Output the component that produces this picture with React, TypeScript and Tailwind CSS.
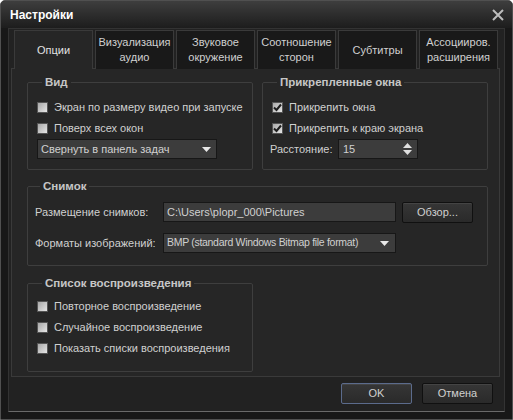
import React from 'react';

const tabs = [
  ['Опции'],
  ['Визуализация', 'аудио'],
  ['Звуковое', 'окружение'],
  ['Соотношение', 'сторон'],
  ['Субтитры'],
  ['Ассоцииров.', 'расширения'],
];

const Check: React.FC<{ checked?: boolean; label: string }> = ({ checked, label }) => (
  <div className="h-[21px] flex items-center gap-[6px] whitespace-nowrap">
    <span className="w-[11px] h-[11px] shrink-0 border border-[#555] bg-gradient-to-br from-[#a8a8a8] to-[#e6e6e6] flex items-center justify-center">
      {checked && (
        <svg width="9" height="9" viewBox="0 0 9 9">
          <path d="M1 4.5 L3.5 7 L8 1.5" stroke="#1e1e1e" strokeWidth="2" fill="none" />
        </svg>
      )}
    </span>
    <span>{label}</span>
  </div>
);

const Arrow: React.FC = () => (
  <svg width="9" height="5" viewBox="0 0 9 5" className="shrink-0">
    <path d="M0 0 H9 L4.5 5 Z" fill="#e8e8e8" />
  </svg>
);

const Group: React.FC<{ title: string; className: string; children: React.ReactNode }> = ({ title, className, children }) => (
  <fieldset className={`min-w-0 shrink-0 border border-[#3e3e3e] rounded-[2px] px-[9px] ${className}`}>
    <legend className="ml-[5px] px-[3px] font-bold text-[11.5px] text-[#c6c6c6] leading-[14px]">{title}</legend>
    {children}
  </fieldset>
);

const Button: React.FC<{ label: string; primary?: boolean; className?: string }> = ({ label, primary, className }) => (
  <div
    className={`h-[21px] w-[71px] shrink-0 flex items-center justify-center rounded-[2px] bg-gradient-to-b from-[#363636] to-[#2a2a2a] border ${
      primary ? 'border-[#5b6b8c]' : 'border-[#101010]'
    } shadow-[inset_0_1px_0_#444] ${className ?? ''}`}
  >
    {label}
  </div>
);

export default function App() {
  return (
    <div className="w-[513px] h-[420px] bg-[#181818] flex flex-col font-['Liberation_Sans',Arial,sans-serif] text-[11px] text-[#d0d0d0] border border-[#505050] rounded-t-[5px] overflow-hidden">
      <div className="h-[27px] shrink-0 flex items-center justify-between pl-[9px] pr-[8px] bg-gradient-to-b from-[#3e3e3e] to-[#1d1d1d]">
        <span className="font-bold text-[12px] text-white">Настройки</span>
        <svg width="12" height="12" viewBox="0 0 12 12">
          <path d="M1 1 L11 11 M11 1 L1 11" stroke="#bdbdbd" strokeWidth="2" />
        </svg>
      </div>

      <div className="flex-1 mx-[7px] mb-[7px] bg-[#222] border border-[#333] border-b-[#6a6a6a] flex flex-col pl-[2px] pr-[4px] pt-[1px]">
        <div className="flex gap-[2px] ml-[3px] h-[39px] relative z-10">
          {tabs.map((t, i) => (
            <div
              key={i}
              className={`w-[79px] flex flex-col items-center justify-center leading-[15px] text-center whitespace-nowrap border border-[#3a3a3a] border-b-0 ${
                i === 0 ? 'bg-[#262626] text-[#e2e2e2]' : 'bg-[#191919] border-b border-b-[#3a3a3a]'
              }`}
            >
              {t.map((l) => (
                <span key={l}>{l}</span>
              ))}
            </div>
          ))}
        </div>

        <div className="h-[309px] -mt-px bg-[#262626] border border-[#3a3a3a] pl-[15px] pt-[6px] flex flex-col">
          <div className="flex gap-[9px]">
            <Group title="Вид" className="w-[226px] h-[95px] pt-[8px]">
              <Check label="Экран по размеру видео при запуске" />
              <Check label="Поверх всех окон" />
              <div className="w-[180px] h-[20px] bg-[#3c3c3c] border border-[#171717] flex items-center justify-between pl-[3px] pr-[5px]">
                <span>Свернуть в панель задач</span>
                <Arrow />
              </div>
            </Group>
            <Group title="Прикрепленные окна" className="w-[226px] h-[95px] pt-[8px]">
              <Check checked label="Прикрепить окна" />
              <Check checked label="Прикрепить к краю экрана" />
              <div className="flex items-center -ml-[2px]">
                <span className="w-[68px] shrink-0">Расстояние:</span>
                <div className="w-[80px] h-[20px] bg-[#3c3c3c] border border-[#171717] flex items-center justify-between pl-[4px] pr-[5px]">
                  <span>15</span>
                  <div className="flex flex-col gap-[2px]">
                    <svg width="9" height="5" viewBox="0 0 9 5">
                      <path d="M0 5 H9 L4.5 0 Z" fill="#e0e0e0" />
                    </svg>
                    <svg width="9" height="5" viewBox="0 0 9 5">
                      <path d="M0 0 H9 L4.5 5 Z" fill="#e0e0e0" />
                    </svg>
                  </div>
                </div>
              </div>
            </Group>
          </div>

          <Group title="Снимок" className="w-[461px] h-[87px] mt-[9px] pt-[9px] pl-[7px]">
            <div className="flex items-center h-[20px] whitespace-nowrap">
              <span className="w-[128px] shrink-0">Размещение снимков:</span>
              <div className="w-[233px] h-[20px] shrink-0 bg-[#3c3c3c] border border-[#171717] flex items-center pl-[3px]">
                C:\Users\plopr_000\Pictures
              </div>
              <Button label="Обзор..." className="ml-[6px] h-[20px]" />
            </div>
            <div className="flex items-center h-[20px] mt-[11px] whitespace-nowrap">
              <span className="w-[128px] shrink-0">Форматы изображений:</span>
              <div className="w-[233px] h-[20px] shrink-0 bg-[#3c3c3c] border border-[#171717] flex items-center justify-between pl-[3px] pr-[6px]">
                <span className="text-[10.5px] tracking-[-0.3px]">BMP (standard Windows Bitmap file format)</span>
                <Arrow />
              </div>
            </div>
          </Group>

          <Group title="Список воспроизведения" className="w-[226px] h-[96px] mt-[10px] pt-[6px]">
            <Check label="Повторное воспроизведение" />
            <Check label="Случайное воспроизведение" />
            <Check label="Показать списки воспроизведения" />
          </Group>
        </div>

        <div className="flex justify-end gap-[10px] mt-[6px] pr-[7px]">
          <Button label="OK" primary />
          <Button label="Отмена" />
        </div>
      </div>
    </div>
  );
}
